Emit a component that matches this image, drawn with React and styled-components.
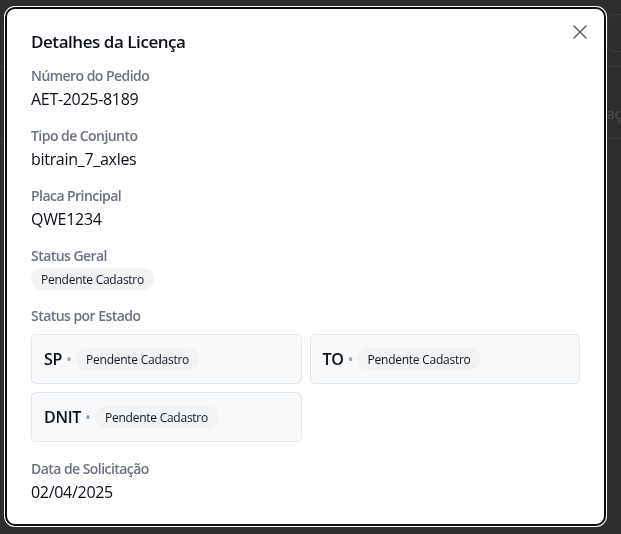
import React from 'react'
import styled, { createGlobalStyle } from 'styled-components'
import { X } from 'lucide-react'

const GlobalStyle = createGlobalStyle`
   html, body {
      margin: 0;
      padding: 0;
      background: #2e2e2e;
      font-family: "Open Sans", "Noto Sans", Arial, sans-serif;
      overflow: hidden;
   }
   * {
      box-sizing: border-box;
   }
`

const BgPage = styled.div`
   height: 534px;
   display: flex;
   flex-direction: column;
   color: #4d4d4d;
`
const BgTopBar = styled.div`
   height: 67px;
   display: flex;
   justify-content: flex-end;
   align-items: center;
   border-bottom: 1px solid #3a3a3a;
`
const BgButton = styled.div`
   width: 34px;
   height: 38px;
   margin-right: -20px;
   border: 1px solid #3d3d3d;
   border-radius: 6px;
`
const BgRow = styled.div`
   height: 72px;
   display: flex;
   justify-content: flex-start;
   align-items: flex-start;
   padding: 37px 0 0 582px;
   border-bottom: 1px solid #3a3a3a;
   font-size: 14px;
   white-space: nowrap;
   overflow: hidden;
`

const Overlay = styled.div`
   position: fixed;
   inset: 0;
`
const Dialog = styled.div`
   margin: 9px 0 0 7px;
   width: 597px;
   background: #ffffff;
   border-radius: 8px;
   padding: 24px 24px 20px;
   position: relative;
   outline: 2px solid #101010;
   box-shadow: 0 0 0 3px #ffffff;
   color: #0b0f19;
`
const CloseButton = styled.button`
   position: absolute;
   top: 11px;
   right: 12px;
   width: 24px;
   height: 24px;
   padding: 0;
   border: none;
   background: none;
   color: #5f6368;
   display: flex;
   align-items: center;
   justify-content: center;
   cursor: pointer;
`
const Title = styled.h2`
   margin: 0 0 15px;
   font-size: 17px;
   line-height: 18px;
   font-weight: 600;
   letter-spacing: -0.45px;
   color: #0b0f19;
`
const Fields = styled.div`
   display: flex;
   flex-direction: column;
   gap: 15px;
`
const Field = styled.div`
   display: flex;
   flex-direction: column;
`
const Label = styled.div`
   font-size: 14px;
   line-height: 20px;
   font-weight: 600;
   letter-spacing: -0.55px;
   color: #6b7280;
`
const Value = styled.div`
   margin-top: 1px;
   font-size: 16px;
   line-height: 24px;
   letter-spacing: -0.3px;
   color: #0b0f19;
`
const BadgeLine = styled.div`
   margin-top: 1px;
   height: 24px;
   display: flex;
   align-items: center;
`
const Badge = styled.span`
   display: inline-flex;
   align-items: center;
   height: 22px;
   padding: 0 10px;
   border-radius: 999px;
   background: #f1f3f5;
   font-size: 12px;
   font-weight: 500;
   letter-spacing: -0.25px;
   color: #111827;
   white-space: nowrap;
`
const StateGrid = styled.div`
   margin: 8px 0 2px;
   display: grid;
   grid-template-columns: 1fr 1fr;
   gap: 8px;
`
const StateCard = styled.div`
   display: flex;
   align-items: center;
   gap: 4px;
   padding: 12px;
   background: #f8f9fb;
   border: 1px solid #e3e6ea;
   border-radius: 5px;
`
const StateCode = styled.span`
   font-size: 16px;
   line-height: 24px;
   font-weight: 600;
   letter-spacing: -0.3px;
   color: #0b0f19;
`
const Dot = styled.span`
   color: #9ca3af;
   font-size: 16px;
   line-height: 24px;
`

const fields = [
   { label: 'Número do Pedido', value: 'AET-2025-8189' },
   { label: 'Tipo de Conjunto', value: 'bitrain_7_axles' },
   { label: 'Placa Principal', value: 'QWE1234' },
]

const states = ['SP', 'TO', 'DNIT']

const App = () => {
   return (
      <>
         <GlobalStyle />
         <BgPage>
            <BgTopBar><BgButton /></BgTopBar>
            <BgRow>Situação</BgRow>
         </BgPage>
         <Overlay>
            <Dialog role="dialog">
               <CloseButton aria-label="Fechar"><X size={24} strokeWidth={1.5} /></CloseButton>
               <Title>Detalhes da Licença</Title>
               <Fields>
                  {fields.map(field => (
                     <Field key={field.label}>
                        <Label>{field.label}</Label>
                        <Value>{field.value}</Value>
                     </Field>
                  ))}
                  <Field>
                     <Label>Status Geral</Label>
                     <BadgeLine><Badge>Pendente Cadastro</Badge></BadgeLine>
                  </Field>
                  <Field>
                     <Label>Status por Estado</Label>
                     <StateGrid>
                        {states.map(state => (
                           <StateCard key={state}>
                              <StateCode>{state}</StateCode>
                              <Dot>•</Dot>
                              <Badge>Pendente Cadastro</Badge>
                           </StateCard>
                        ))}
                     </StateGrid>
                  </Field>
                  <Field>
                     <Label>Data de Solicitação</Label>
                     <Value>02/04/2025</Value>
                  </Field>
               </Fields>
            </Dialog>
         </Overlay>
      </>
   )
}

export default App
